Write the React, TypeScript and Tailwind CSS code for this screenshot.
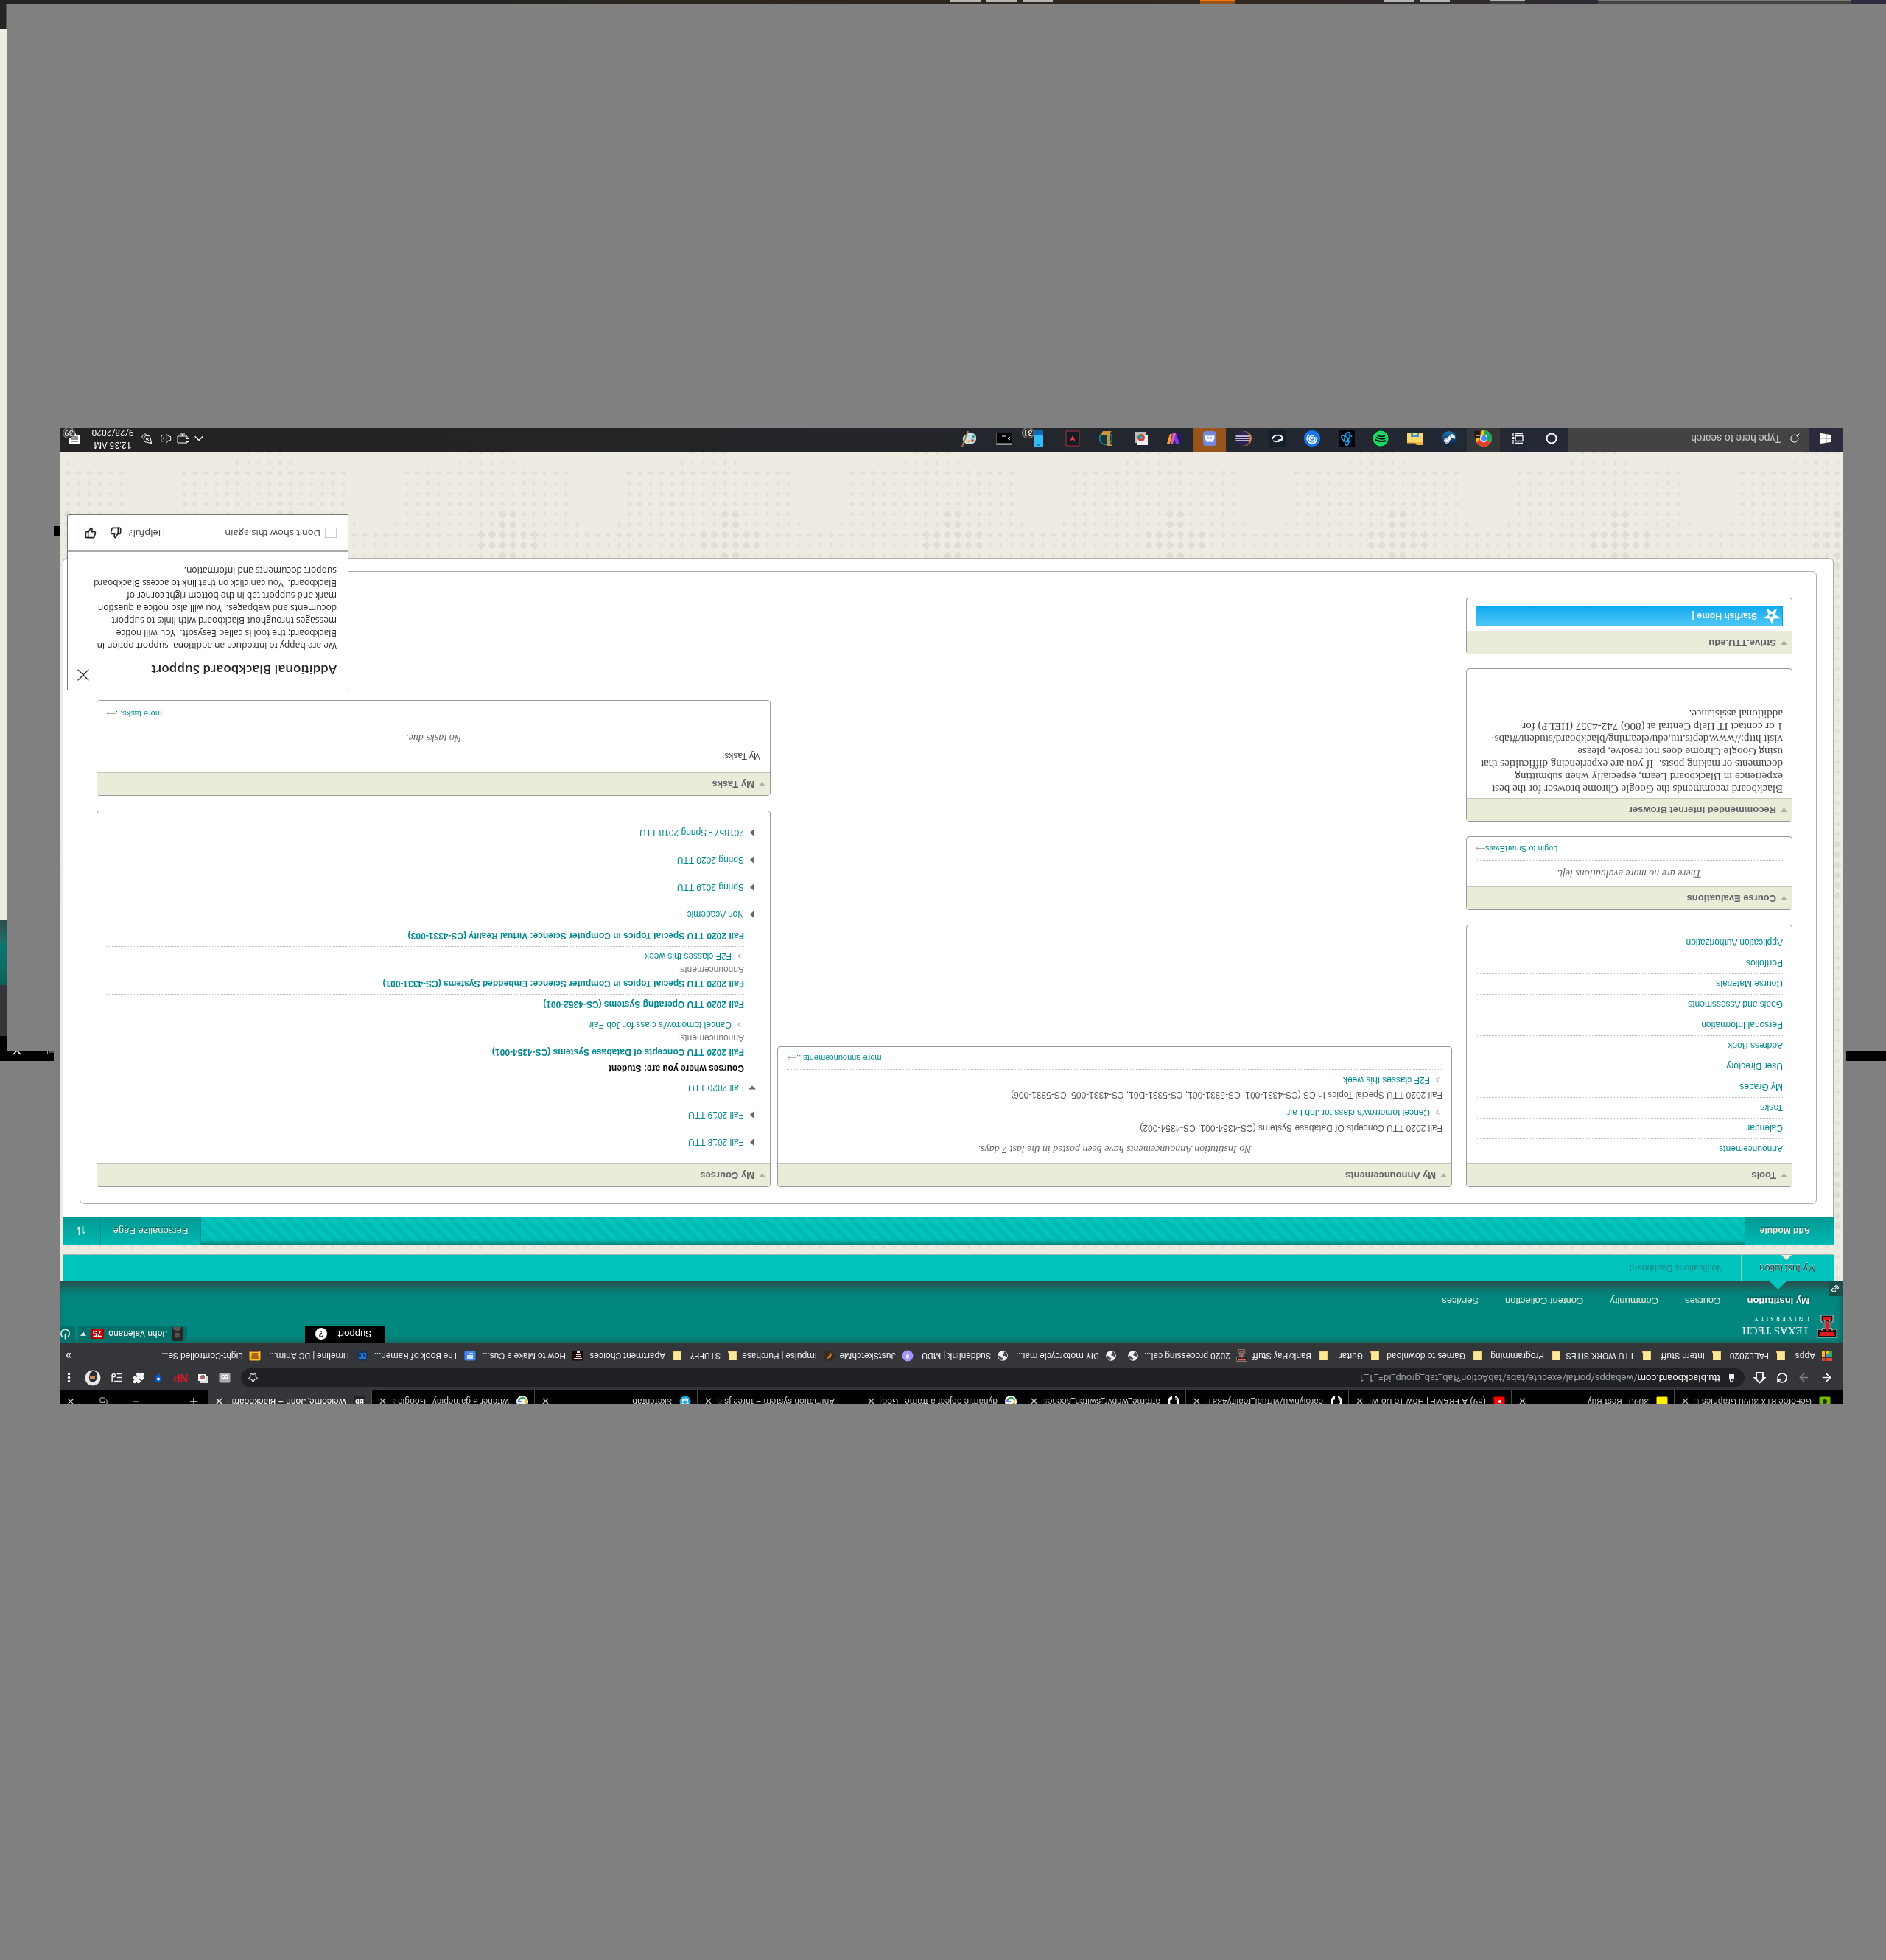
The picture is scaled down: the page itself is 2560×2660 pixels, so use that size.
import React from "react";
import {
  ArrowLeft,
  ArrowRight,
  RotateCw,
  Star,
  Puzzle,
  ListMusic,
  EllipsisVertical,
  Link2,
  Power,
  ThumbsUp,
  ThumbsDown,
  X,
  Plus,
  Minus,
  Copy,
  Search,
  ChevronUp,
  Volume2,
  PenTool,
} from "lucide-react";
import { FaSpotify, FaSteamSymbol, FaDiscord, FaWindows, FaGithub } from "react-icons/fa";

const SANS = "font-['Liberation_Sans',Arial,sans-serif]";
const UI = "font-[Roboto,'Open_Sans',sans-serif]";
const SERIF = "font-['Liberation_Serif','Times_New_Roman',serif]";

/* ---------- small drawings ---------- */

function ChromeMark({ size = 16 }: { size?: number }) {
  return (
    <svg width={size} height={size} viewBox="0 0 24 24">
      <circle cx="12" cy="12" r="12" fill="#fbc116" />
      <path d="M12 12 1.6 6A12 12 0 0 1 22.4 6z" fill="#e0412f" />
      <path d="M12 12 1.6 6A12 12 0 0 0 12 24z" fill="#1da362" />
      <path d="M12 6h10.4L17 12z" fill="#e0412f" />
      <circle cx="12" cy="12" r="5.6" fill="#fff" />
      <circle cx="12" cy="12" r="4.5" fill="#4a8cf6" />
    </svg>
  );
}

function GoogleMark() {
  return (
    <svg width="16" height="16" viewBox="0 0 16 16">
      <circle cx="8" cy="8" r="8" fill="#fff" />
      <path d="M3.5 5.5A5 5 0 0 1 12 5" stroke="#ea4335" strokeWidth="2.2" fill="none" />
      <path d="M3.4 10.4a5 5 0 0 1 .1-5" stroke="#fbbc05" strokeWidth="2.2" fill="none" />
      <path d="M3.4 10.4A5 5 0 0 0 11.6 11.6" stroke="#34a853" strokeWidth="2.2" fill="none" />
      <path d="M8 8h5a5 5 0 0 1-1.5 3.6" stroke="#4285f4" strokeWidth="2.2" fill="none" />
    </svg>
  );
}

function FolderMark() {
  return (
    <svg width="16" height="16" viewBox="0 0 16 16">
      <path d="M2 2h11v9.5l1 1V15H2z" fill="#f0cf63" />
      <path d="M3 2h9.4v11.4H3z" fill="#ffe79a" />
    </svg>
  );
}

function GlobeMark() {
  return (
    <svg width="16" height="16" viewBox="0 0 16 16">
      <circle cx="8" cy="8" r="6.8" fill="#f1f3f4" />
      <path
        d="M2 7c2-.5 3 1 4.500 1S8 10 7 11s-.5 2-1.500 3C3 12.500 1.500 10 2 7zM9 2c-1 1-2 1.500-1.500 2.500S10 5 10 6.500 13 8 14 8c0-3-2-5.500-5-6z"
        fill="#46484c"
      />
    </svg>
  );
}

function AppsMark() {
  const colors = ["#ea4335", "#ea4335", "#ea4335", "#34a853", "#4285f4", "#fbbc05", "#34a853", "#fbbc05", "#fbbc05"];
  return (
    <svg width="16" height="16" viewBox="0 0 16 16">
      {colors.map((c, i) => (
        <rect key={i} x={1 + (i % 3) * 5} y={1 + Math.floor(i / 3) * 5} width="4" height="4" fill={c} />
      ))}
    </svg>
  );
}

function TTMark({ size = 16, red = "#e11b22" }: { size?: number; red?: string }) {
  return (
    <svg width={size} height={Math.round(size * 1.15)} viewBox="0 0 28 32">
      <path d="M1 1h26v11h-8v10h3v9H6v-9h3V12H1z" fill="#111" stroke="#cfcfcf" strokeWidth="1" />
      <path d="M3 3h22l-2 5H5z" fill={red} />
      <path d="M12 10h4v13h-4zM8.500 25h11v3.500h-11z" fill={red} />
      <path d="M7 10v3h4v11H8M21 10v3h-4v11h3" stroke="#e8e8e8" strokeWidth=".9" fill="none" />
    </svg>
  );
}

function Tile({ bg, fg, shape }: { bg: string; fg: string; shape: "lines" | "dot" | "bars" | "face" | "wave" | "play" }) {
  return (
    <svg width="16" height="16" viewBox="0 0 16 16">
      <rect x="0.5" y="1.5" width="15" height="13" rx="1.5" fill={bg} />
      {shape === "lines" && <path d="M4 5h8M4 8h8M4 11h5" stroke={fg} strokeWidth="1.600" />}
      {shape === "dot" && <circle cx="8" cy="8" r="3" fill={fg} />}
      {shape === "play" && <path d="M6 5.500 11 8l-5 2.500z" fill={fg} />}
      {shape === "bars" && <path d="M2 4h11M3 7h7M4 10h6M5 13h4" stroke={fg} strokeWidth="2" />}
      {shape === "face" && <path d="M3 4h10l-1 8H4zM2 13h12v2H2z" fill={fg} />}
      {shape === "wave" && <path d="M4 9.500c0-3 3-3 4 0s4 3 4 0-3-3-4 0-4 3-4 0" stroke={fg} strokeWidth="1.300" fill="none" />}
    </svg>
  );
}

function RoundMark({ bg, fg, kind }: { bg: string; fg: string; kind: "pin" | "ring" | "cube" | "slash" }) {
  return (
    <svg width="16" height="16" viewBox="0 0 16 16">
      <circle cx="8" cy="8" r="7.500" fill={bg} />
      {kind === "pin" && <path d="M8 3v9M6.500 5h3v4h-3z" stroke={fg} fill={fg} />}
      {kind === "ring" && <path d="M4 11V5h2a3 3 0 0 1 0 6zM13 6a3 3 0 1 0 0 4" stroke={fg} strokeWidth="1.800" fill="none" />}
      {kind === "cube" && <path d="M3 5.500 8 3l5 2.500-1.500 1L8 5 4.500 6.500zM4 7l3.500 1.700V13L4 11zM12 7 8.500 8.700V13L12 11z" fill={fg} />}
      {kind === "slash" && <path d="M5 12c-2-4 2-8 6-8-2 1-2 4-4 5s0 2-2 3z" fill={fg} />}
    </svg>
  );
}

/* dotted world-map backdrop: a tile of small crosses with a few heavy clusters */
function CrossBackdrop() {
  const small: string[] = [];
  const big: string[] = [];
  for (let row = 0; row < 32; row++) {
    for (let i = 0; i < 21; i++) {
      let from = 0;
      let to = 20;
      if (row === 0) [from, to] = [7, 10];
      else if (row === 1) [from, to] = [6, 11];
      else if (row < 7) [from, to] = [1, 16];
      else if (row === 7) [from, to] = [0, 17];
      else if (row > 11 && row < 16) [from, to] = [1, 19];
      if (i < from || i > to) continue;
      const x = (((10 - i) * 14.4 + 302) % 302) + 7;
      const y = 448 - 14 * row - 7;
      const heavy = (row >= 6 && row <= 11 && (i === 10 || i === 11)) || ((row === 8 || row === 9) && i >= 8 && i <= 13);
      if (heavy) big.push(`M${x - 2.5} ${y}h5M${x} ${y - 2.5}v5`);
      else small.push(`M${x - 3.5} ${y}h7M${x} ${y - 3.5}v7`);
    }
  }
  return (
    <svg className="absolute inset-0 h-full w-full" aria-hidden="true">
      <defs>
        <pattern id="crosses" width="302" height="448" x="0" y="236" patternUnits="userSpaceOnUse">
          <path d={small.join("")} stroke="#e3e0d8" strokeWidth="2" />
          <path d={big.join("")} stroke="#e0ddd5" strokeWidth="5" strokeLinecap="round" />
        </pattern>
      </defs>
      <rect width="100%" height="100%" fill="#eeebe3" />
      <rect width="100%" height="100%" fill="url(#crosses)" />
    </svg>
  );
}

/* ---------- browser chrome ---------- */

const tabs: { title: string; icon: React.ReactNode }[] = [
  { title: "GeForce RTX 3090 Graphics Card", icon: <Tile bg="#76b900" fg="#1d2b05" shape="dot" /> },
  { title: "3090 - Best Buy", icon: <Tile bg="#fff200" fg="#fff200" shape="dot" /> },
  { title: "(59) A-FRAME | How To Do Web", icon: <Tile bg="#ff0000" fg="#ffffff" shape="play" /> },
  { title: "carolynwu/virtual_reality4331: T", icon: <FaGithub size={16} color="#fff" /> },
  { title: "aframe_webvr_switch_scenes/inc", icon: <FaGithub size={16} color="#fff" /> },
  { title: "dynamic object a-frame - Googl", icon: <GoogleMark /> },
  { title: "Animation system – three.js doc", icon: <span className="w-4" /> },
  { title: "Sketchfab", icon: <RoundMark bg="#1caad9" fg="#fff" kind="cube" /> },
  { title: "witcher 3 gameplay - Google Se", icon: <GoogleMark /> },
];

function Tab({ title, icon, active }: { title: string; icon: React.ReactNode; active?: boolean }) {
  return (
    <div
      className={
        active
          ? "flex h-full w-[221px] shrink-0 items-end bg-[#35363a] pr-2 pl-2 text-white"
          : "flex h-full w-[221px] shrink-0 items-end border-r border-[#4a4b4e] pr-2 pl-2 text-[#c8cbcf]"
      }
    >
      <div className="flex h-8 w-full shrink-0 items-center">
        <span className="flex w-[26px] shrink-0">{icon}</span>
        <span className="min-w-0 flex-1 overflow-hidden mask-r-from-92% text-[12px] leading-4 whitespace-nowrap">{title}</span>
        <button aria-label="Close tab" className="ml-1 shrink-0">
          <X size={13} strokeWidth={2.4} />
        </button>
      </div>
    </div>
  );
}

function TabStrip() {
  return (
    <div className={`${UI} flex h-[19px] items-end overflow-hidden bg-black pl-2`}>
      {tabs.map((t) => (
        <Tab key={t.title} title={t.title} icon={t.icon} />
      ))}
      <Tab
        active
        title="Welcome, John – Blackboard Le"
        icon={
          <span className="flex h-4 w-4 items-center justify-center border border-[#d9a441] bg-[#222] text-[10px] leading-3 font-bold text-white">
            Bb
          </span>
        }
      />
      <div className="flex h-8 flex-1 items-center text-[#d5d7da]">
        <button aria-label="New tab" className="ml-3">
          <Plus size={16} />
        </button>
        <span className="flex-1" />
        <button aria-label="Minimize" className="mr-8">
          <Minus size={12} />
        </button>
        <button aria-label="Restore" className="mr-8">
          <Copy size={11} />
        </button>
        <button aria-label="Close window" className="mr-2">
          <X size={14} />
        </button>
      </div>
    </div>
  );
}

function AddressRow() {
  return (
    <div className={`${UI} flex h-[29px] items-end bg-[#35363a] pt-[3px]`}>
      <div className="flex h-[26px] w-[133px] shrink-0 items-center pl-[13px] text-white">
        <button aria-label="Back" className="w-[31px]">
          <ArrowLeft size={17} strokeWidth={2.4} />
        </button>
        <button aria-label="Forward" className="w-[30px] text-[#84868a]">
          <ArrowRight size={17} strokeWidth={2.4} />
        </button>
        <button aria-label="Reload" className="w-[30px]">
          <RotateCw size={16} strokeWidth={2.4} />
        </button>
        <button aria-label="Home">
          <svg width="17" height="17" viewBox="0 0 17 17" fill="none" stroke="#fff" strokeWidth="1.800">
            <path d="M8.500 1.500 1.500 8H4v7h9V8h2.500z" />
          </svg>
        </button>
      </div>
      <div className="flex h-[26px] min-w-0 flex-1 items-center rounded-full bg-[#202124] pr-[9px] pl-3 text-[13px]">
        <svg width="11" height="12" viewBox="0 0 11 12">
          <path d="M2 5h7v6H2z" fill="#e8eaed" />
          <path d="M3.500 5V3a2 2 0 0 1 4 0v2" fill="none" stroke="#e8eaed" strokeWidth="1.300" />
        </svg>
        <label htmlFor="url" className="ml-[10px] text-white">
          ttu.blackboard.com
        </label>
        <input
          id="url"
          defaultValue="/webapps/portal/execute/tabs/tabAction?tab_tab_group_id=_1_1"
          className="min-w-0 flex-1 bg-transparent text-[#9aa0a6] outline-none"
        />
        <button aria-label="Bookmark" className="text-[#d5d7da]">
          <Star size={15} />
        </button>
      </div>
      <div className="flex h-[26px] w-[246px] shrink-0 items-center justify-between pr-1 pl-[14px] text-white">
        <Tile bg="#a9abae" fg="#fff" shape="wave" />
        <svg width="16" height="16" viewBox="0 0 16 16">
          <path d="M1 1h11v9H1z" fill="#ddd" />
          <path d="M4 4h11v9H4z" fill="#fff" />
          <circle cx="9" cy="9" r="3" fill="#ea4335" />
          <path d="M9 9H6a3 3 0 0 0 3 3z" fill="#34a853" />
          <circle cx="9" cy="9" r="1.300" fill="#4285f4" />
        </svg>
        <span className="text-[15px] leading-4 font-medium text-[#e0142c]">NP</span>
        <svg width="14" height="16" viewBox="0 0 14 16">
          <path d="M7 15C5 11 2.500 9 2.500 6a4.500 4.500 0 0 1 9 0c0 3-2.500 5-4.500 9z" fill="#0b57d0" />
          <circle cx="7" cy="6.500" r="2" fill="#fff" />
        </svg>
        <Puzzle size={16} fill="#f1f3f4" />
        <ListMusic size={17} />
        <svg width="22" height="22" viewBox="0 0 22 22">
          <circle cx="11" cy="11" r="10.500" fill="#e8e6e2" />
          <path d="M5 18c0-7 0-11 6-13 4 0 5 3 5 7l-1 5-4 4z" fill="#2b2c30" />
          <path d="M8 10h7v3H8z" fill="#c58c5d" />
        </svg>
        <EllipsisVertical size={17} strokeWidth={3} />
      </div>
    </div>
  );
}

const bookmarks: { label: string; w: string; icon: React.ReactNode }[] = [
  { label: "Apps", w: "w-[63px]", icon: <AppsMark /> },
  { label: "FALL2020", w: "w-[87px]", icon: <FolderMark /> },
  { label: "Intern Stuff", w: "w-[95px]", icon: <FolderMark /> },
  { label: "TTU WORK SITES", w: "w-[123px]", icon: <FolderMark /> },
  { label: "Programming", w: "w-[107px]", icon: <FolderMark /> },
  { label: "Games to download", w: "w-[139px]", icon: <FolderMark /> },
  { label: "Guitar", w: "w-[70px]", icon: <FolderMark /> },
  { label: "Bank/Pay Stuff", w: "w-[111px]", icon: <FolderMark /> },
  { label: "2020 processing cal...", w: "w-[147px]", icon: <TTMark size={15} red="#e0695c" /> },
  { label: "", w: "w-[30px]", icon: <GlobeMark /> },
  { label: "DIY motorcycle mai...", w: "w-[147px]", icon: <GlobeMark /> },
  { label: "Suddenlink | MDU", w: "w-[129px]", icon: <GlobeMark /> },
  { label: "JustSketchMe", w: "w-[107px]", icon: <RoundMark bg="#a594f9" fg="#e4defd" kind="pin" /> },
  { label: "Impulse | Purchase", w: "w-[131px]", icon: <RoundMark bg="#3a2a18" fg="#d88b2a" kind="slash" /> },
  { label: "STUFF?", w: "w-[75px]", icon: <FolderMark /> },
  { label: "Apartment Choices", w: "w-[135px]", icon: <FolderMark /> },
  { label: "How to Make a Cus...", w: "w-[146px]", icon: <Tile bg="#190506" fg="#e8dcdc" shape="bars" /> },
  { label: "The Book of Ramen...", w: "w-[146px]", icon: <Tile bg="#4285f4" fg="#fff" shape="lines" /> },
  { label: "Timeline | DC Anim...", w: "w-[146px]", icon: <RoundMark bg="#16335b" fg="#1f7fe0" kind="ring" /> },
  { label: "Light-Controlled Se...", w: "w-[130px]", icon: <Tile bg="#ffc21a" fg="#a8641e" shape="face" /> },
];

function BookmarkRow() {
  return (
    <nav
      className={`${UI} flex h-[35px] items-center overflow-hidden border-b border-[#222326] bg-[#35363a] pl-[13px] text-[12px] text-[#eceef0]`}
    >
      {bookmarks.map((b, i) => (
        <a key={i} href="#" aria-label={b.label || "Site"} className={`${b.w} flex shrink-0 items-center gap-2 whitespace-nowrap`}>
          <span className="shrink-0">{b.icon}</span>
          {b.label}
        </a>
      ))}
      <button className="mr-2 ml-auto text-[16px] font-bold">»</button>
    </nav>
  );
}

/* ---------- institution header ---------- */

function SiteHeader() {
  const nav = ["Courses", "Community", "Content Collection", "Services"];
  return (
    <header
      className={`${SANS} relative flex h-[83px] justify-between bg-[#00877f] shadow-[inset_0_-16px_14px_-8px_#2f4a4a,inset_0_5px_8px_-4px_#1d5c58,inset_8px_0_10px_-8px_#1d5c58]`}
    >
      <div className="flex flex-col">
        <div className="flex h-10 items-start pt-[6px] pl-[7px] text-white">
          <TTMark size={28} />
          <div className={`${SERIF} ml-[10px] flex flex-col`}>
            <span className="border-b border-[#a8c9c6] text-[15px] leading-5">TEXAS TECH</span>
            <span className="text-[8px] leading-3 tracking-[3px]">UNIVERSITY.</span>
          </div>
        </div>
        <div className="flex h-[34px] items-center pl-[45px] text-[13px] text-[#e6efd8]">
          <a href="#" className="mr-9 font-bold text-white [text-shadow:0_1px_3px_#00302d]">
            My Institution
          </a>
          {nav.map((n) => (
            <a key={n} href="#" className="mr-9">
              {n}
            </a>
          ))}
        </div>
      </div>
      <div className="flex h-[23px] items-stretch text-[12px] text-white">
        <button className={`${UI} mr-40 flex w-[108px] items-center justify-between bg-black pr-[14px] pl-[18px] text-[13px]`}>
          Support
          <span className="flex h-4 w-4 items-center justify-center rounded-full bg-white text-[13px] font-bold text-black">?</span>
        </button>
        <button className="flex w-[148px] items-center bg-[#00706a] pl-[6px]">
          <svg width="15" height="19" viewBox="0 0 15 19">
            <rect width="15" height="19" fill="#262626" />
            <circle cx="7.500" cy="8" r="3.500" fill="#555" />
            <path d="M2 19c0-7 11-7 11 0z" fill="#555" />
          </svg>
          <span className={`${UI} ml-[6px] text-[12px]`}>John Valeriano</span>
          <span className="ml-[6px] bg-[#b80000] px-[3px] text-[11px] leading-[14px] font-bold">75</span>
          <svg className="ml-[6px]" width="8" height="6" viewBox="0 0 8 6">
            <path d="M0 0h8L4 6z" fill="#d5dfd8" />
          </svg>
        </button>
        <button aria-label="Log out" className="ml-1 flex w-[21px] items-center justify-end overflow-hidden bg-[#00706a]">
          <Power size={15} strokeWidth={2.6} className="shrink-0 text-[#e2ebe4]" />
        </button>
      </div>
      <button
        aria-label="Quick links"
        className="absolute bottom-0 left-0 flex h-5 w-[19px] items-center justify-center bg-[#1c4e4c] text-white"
      >
        <Link2 size={12} className="-rotate-45" strokeWidth={2.4} />
      </button>
      <svg className="absolute bottom-0 left-[76px]" width="23" height="11" viewBox="0 0 23 11">
        <path d="M0 11h23L11.500 0z" fill="#00c4bd" />
      </svg>
    </header>
  );
}

function SubTabs() {
  return (
    <nav className={`${SANS} relative mr-1 ml-3 flex h-[37px] items-stretch border-b border-[#a9b5ac] bg-[#00c4bd] text-[12px]`}>
      <a
        href="#"
        className="relative flex w-[126px] items-center justify-center border-r border-[#8fcfa8] text-[13px] text-[#333a40] [text-shadow:0_1px_0_#c8e8e0]"
      >
        My Institution
        <svg className="absolute bottom-0 left-[57px]" width="14" height="7" viewBox="0 0 14 7">
          <path d="M0 7 7 0l7 7z" fill="#eeebe3" />
        </svg>
      </a>
      <a href="#" className="flex items-center pl-6 text-[#158d88]">
        Notifications Dashboard
      </a>
    </nav>
  );
}

function ModuleBar() {
  const btn =
    "flex items-center justify-center border-[#008f8a] bg-linear-to-b from-[#00b8b2] to-[#009993] text-[#f0f0e4] [text-shadow:0_1px_1px_#004744]";
  return (
    <div className="mt-3 mr-1 ml-3 flex h-[39px] items-stretch border-t border-[#8a9a94] bg-[repeating-linear-gradient(45deg,#00c4bd_0_6px,#00bab3_6px_12px)] shadow-[inset_0_7px_5px_-4px_#007d78]">
      <button className={`${SANS} ${btn} w-[121px] border-r pl-3 text-[12px] font-bold`}>Add Module</button>
      <span className="flex-1" />
      <button className={`${SANS} ${btn} w-[137px] border-x text-[13px]`}>Personalize Page</button>
      <button aria-label="Reorder" className={`${btn} w-[51px]`}>
        <svg width="12" height="12" viewBox="0 0 12 12" fill="none" stroke="#f0f0e4" strokeWidth="1.800">
          <path d="M3.500 12V2M1 4l2.500-3M8.500 0v11M8.500 11l2.500-3" />
        </svg>
      </button>
    </div>
  );
}

/* ---------- portal modules ---------- */

function Panel({ title, children, open }: { title: string; children: React.ReactNode; open?: boolean }) {
  return (
    <section
      className={
        open
          ? "mb-5 rounded-sm border border-t-0 border-[#999] bg-white"
          : "mb-5 rounded-sm border border-[#999] bg-white"
      }
    >
      <h2
        className={`${SANS} flex h-[31px] items-center border-b border-[#c4c6bc] bg-[#e9ecd8] pl-[6px] text-[13px] font-bold text-[#60626a]`}
      >
        <svg width="9" height="6" viewBox="0 0 9 6" className="mr-[6px]">
          <path d="M0 0h9L4.500 6z" fill="#aeb0a4" />
        </svg>
        {title}
      </h2>
      {children}
    </section>
  );
}

function MoreLink({ children }: { children: React.ReactNode }) {
  return (
    <span className="flex items-center justify-end text-[11px]">
      <a href="#" className="text-[#008891]">
        {children}
      </a>
      <svg width="13" height="7" viewBox="0 0 13 7" fill="none" stroke="#aaa">
        <path d="M0 3.500h12M9.500 1l2.500 2.500L9.500 6" />
      </svg>
    </span>
  );
}

const tools = [
  "Announcements",
  "Calendar",
  "Tasks",
  "My Grades",
  "User Directory",
  "Address Book",
  "Personal Information",
  "Goals and Assessments",
  "Course Materials",
  "Portfolios",
  "Application Authorization",
];

function LeftColumn() {
  return (
    <div className="mr-[19px] min-w-0 flex-[443]">
      <Panel title="Tools">
        <ul className={`${SANS} px-3 pt-[6px] pb-[9px] text-[12px] text-[#008891]`}>
          {tools.map((t) => (
            <li
              key={t}
              className={
                t === "User Directory" || t === "Application Authorization"
                  ? "flex h-7 items-center"
                  : "flex h-7 items-center border-b border-dotted border-[#bbb]"
              }
            >
              <a href="#">{t}</a>
            </li>
          ))}
        </ul>
      </Panel>
      <Panel title="Course Evaluations">
        <div className="px-3">
          <p className={`${SERIF} flex h-9 items-center justify-center border-b border-dotted border-[#bbb] text-[14px] text-[#666] italic`}>
            There are no more evaluations left.
          </p>
          <div className={`${SANS} flex h-[31px] items-center justify-end`}>
            <MoreLink>Login to SmartEvals</MoreLink>
          </div>
        </div>
      </Panel>
      <Panel title="Recommended Internet Browser">
        <p className={`${SERIF} overflow-hidden px-3 pt-1 pb-[52px] text-[15px] leading-[17px] whitespace-nowrap text-[#444]`}>
          Blackboard recommends the Google Chrome browser for the best
          <br />
          experience in Blackboard Learn, especially when submitting
          <br />
          documents or making posts.&nbsp; If you are experiencing difficulties that
          <br />
          using Google Chrome does not resolve, please
          <br />
          visit http://www.depts.ttu.edu/elearning/blackboard/student/#tabs-
          <br />
          1 or contact IT Help Central at (806) 742-4357 (HELP) for
          <br />
          additional assistance.
        </p>
      </Panel>
      <Panel title="Strive.TTU.edu" open>
        <div className="px-3 pt-[6px] pb-[10px]">
          <div
            className={`${SANS} flex h-7 items-center border border-[#0d9ddb] bg-linear-to-b from-[#4cc7f7] to-[#03a9ee] text-[12px] font-bold text-white`}
          >
            <svg width="24" height="24" viewBox="0 0 24 24" className="mr-2 ml-[2px]">
              <path d="m12 1 3 7.500 8 .5-6.200 5 2.200 8.500-7-4.700L5 22.500 7.200 14 1 9l8-.5z" fill="#fff" />
              <path d="m13 9 1 2.500 2.500.5-2.200 1.500.7 2.500-2-1.500-2 1.500.7-2.500L9.500 12l2.500-.5z" fill="#24b4f0" />
            </svg>
            <a href="#">Starfish Home</a>
            <span className="ml-1">|</span>
          </div>
        </div>
      </Panel>
    </div>
  );
}

function Sub({ children }: { children: React.ReactNode }) {
  return (
    <span className="flex items-center">
      <svg width="5" height="7" viewBox="0 0 5 7" className="mr-2 ml-1" fill="none" stroke="#777">
        <path d="m1 .5 3 3-3 3" />
      </svg>
      <a href="#" className="text-[#008891]">
        {children}
      </a>
    </span>
  );
}

function MiddleColumn() {
  return (
    <div className="mr-[9px] min-w-0 flex-[916]">
      <Panel title="My Announcements">
        <div className={`${SANS} px-3 text-[12px] text-[#555]`}>
          <p className={`${SERIF} flex h-[38px] items-center justify-center text-[14px] text-[#666] italic`}>
            No Institution Announcements have been posted in the last 7 days.
          </p>
          <div className="border-b border-dotted border-[#bbb] pb-1">
            <p className="flex h-5 items-center">Fall 2020 TTU Concepts Of Database Systems (CS-4354-001, CS-4354-002)</p>
            <p className="mb-[3px] flex h-[22px] items-center">
              <Sub>Cancel tomorrow's class for Job Fair</Sub>
            </p>
            <p className="flex h-5 items-center">
              Fall 2020 TTU Special Topics In CS (CS-4331-001, CS-5331-001, CS-5331-D01, CS-4331-005, CS-5331-006)
            </p>
            <p className="flex h-5 items-center">
              <Sub>F2F classes this week</Sub>
            </p>
          </div>
          <div className="flex h-[30px] items-center justify-end">
            <MoreLink>more announcements...</MoreLink>
          </div>
        </div>
      </Panel>
    </div>
  );
}

function Term({ label, expanded }: { label: string; expanded?: boolean }) {
  return (
    <button className="flex h-[37px] items-center text-[#008891]">
      <span className="flex w-[23px] justify-center">
        <svg width="10" height="12" viewBox="0 0 10 12">
          <path d={expanded ? "M0 3.500h10L5 8.500z" : "M2 .5 8 6l-6 5.500z"} fill="#666" />
        </svg>
      </span>
      {label}
    </button>
  );
}

function Course({ title, announcement, last }: { title: string; announcement?: string; last?: boolean }) {
  return (
    <div className={last ? "ml-[23px] pt-1" : "ml-[23px] border-b border-dotted border-[#bbb] pt-1 pb-[3px]"}>
      <a href="#" className="flex h-5 items-center font-bold text-[#008891]">
        {title}
      </a>
      {announcement && (
        <>
          <p className="flex h-[17px] items-center text-[#777]">Announcements:</p>
          <p className="flex h-5 items-center">
            <Sub>{announcement}</Sub>
          </p>
        </>
      )}
    </div>
  );
}

function RightColumn() {
  return (
    <div className="min-w-0 flex-[915]">
      <Panel title="My Courses">
        <div className={`${SANS} flex flex-col items-stretch px-3 pt-[10px] pb-[11px] text-[12px]`}>
          <Term label="Fall 2018 TTU" />
          <Term label="Fall 2019 TTU" />
          <Term label="Fall 2020 TTU" expanded />
          <h3 className="ml-[23px] flex h-4 items-center font-bold text-black">Courses where you are: Student</h3>
          <Course title="Fall 2020 TTU Concepts of Database Systems (CS-4354-001)" announcement="Cancel tomorrow's class for Job Fair" />
          <Course title="Fall 2020 TTU Operating Systems (CS-4352-001)" />
          <Course
            title="Fall 2020 TTU Special Topics in Computer Science: Embedded Systems (CS-4331-001)"
            announcement="F2F classes this week"
          />
          <Course title="Fall 2020 TTU Special Topics in Computer Science: Virtual Reality (CS-4331-003)" last />
          <Term label="Non Academic" />
          <Term label="Spring 2019 TTU" />
          <Term label="Spring 2020 TTU" />
          <Term label="201857 - Spring 2018 TTU" />
        </div>
      </Panel>
      <Panel title="My Tasks">
        <div className={`${SANS} px-3 pt-[10px] pb-[3px] text-[12px] text-[#444]`}>
          <p className="flex h-6 items-center">My Tasks:</p>
          <p className={`${SERIF} mb-[6px] flex h-6 items-center justify-center text-[14px] text-[#666] italic`}>No tasks due.</p>
          <div className="flex h-[30px] items-center justify-end">
            <MoreLink>more tasks...</MoreLink>
          </div>
        </div>
      </Panel>
    </div>
  );
}

function SupportPopup() {
  return (
    <aside className="absolute right-[10px] bottom-[84px] w-[382px] rounded-xs border border-[#777] bg-white font-['Open_Sans','Noto_Sans',sans-serif] text-[#262626]">
      <div className="relative border-b-2 border-[#aaa] px-[15px] pt-4 pb-[17px]">
        <h2 className="text-[17px] leading-[22px] font-semibold">Additional Blackboard Support</h2>
        <button aria-label="Close" className="absolute top-[6px] right-[7px]">
          <X size={28} strokeWidth={1} />
        </button>
        <p className="mt-[13px] text-[12px] leading-[17px] whitespace-nowrap">
          We are happy to introduce an additional support option in
          <br />
          Blackboard; the tool is called Eesysoft.&nbsp; You will notice
          <br />
          messages throughout Blackboard with links to support
          <br />
          documents and webpages.&nbsp; You will also notice a question
          <br />
          mark and support tab in the bottom right corner of
          <br />
          Blackboard.&nbsp; You can click on that link to access Blackboard
          <br />
          support documents and information.
        </p>
      </div>
      <div className="flex h-12 items-center px-[15px] text-[13px] text-[#444]">
        <label htmlFor="hide" className="flex items-center gap-[6px]">
          <input id="hide" type="checkbox" className="h-[14px] w-4 appearance-none border border-[#ccc]" />
          Don't show this again
        </label>
        <span className="mr-[10px] ml-auto">Helpful?</span>
        <button aria-label="Helpful" className="mr-[18px] text-[#222]">
          <ThumbsUp size={16} strokeWidth={2.4} />
        </button>
        <button aria-label="Not helpful" className="mr-2 text-[#222]">
          <ThumbsDown size={16} strokeWidth={2.4} />
        </button>
      </div>
    </aside>
  );
}

/* ---------- taskbar ---------- */

function Slot({ label, children, tone = "none" }: { label: string; children: React.ReactNode; tone?: "none" | "grey" | "orange" }) {
  const bg = tone === "grey" ? "bg-[#343537]" : tone === "orange" ? "bg-[#97541d]" : "";
  return (
    <div className="flex min-w-[46px] flex-1 justify-center">
      <button aria-label={label} className={`${bg} relative flex h-[33px] w-[45px] items-center justify-center pt-1`}>
        {children}
      </button>
    </div>
  );
}

function Count({ n }: { n: string }) {
  return (
    <span className="absolute right-0 -bottom-px flex h-[15px] w-[17px] items-center justify-center rounded-full border border-[#aaa] bg-[#3a3633] text-[11px] leading-3 text-white">
      {n}
    </span>
  );
}

function Taskbar() {
  return (
    <footer
      className={`${UI} flex h-[33px] items-stretch overflow-hidden bg-linear-to-r from-[#2c2b3c] from-0% via-[#222834] via-20% to-[#242322] to-80%`}
    >
      <button aria-label="Start" className="flex w-[46px] shrink-0 items-center justify-center pt-1 text-white">
        <FaWindows size={16} />
      </button>
      <label htmlFor="find" className="flex w-[326px] shrink-0 items-center border-t border-[#6a6a6a] bg-[#434343] pt-1 pl-[11px] text-white">
        <Search size={15} strokeWidth={1.6} className="scale-x-[-1]" />
        <input
          id="find"
          placeholder="Type here to search"
          className="ml-3 min-w-0 flex-1 bg-transparent text-[14px] outline-none placeholder:text-[#c9c9c9]"
        />
      </label>
      <div className="flex w-[92px] shrink-0">
        <Slot label="Cortana">
          <svg width="16" height="16" viewBox="0 0 16 16">
            <circle cx="8" cy="8" r="6.500" fill="none" stroke="#fff" strokeWidth="2" />
          </svg>
        </Slot>
        <Slot label="Task view">
          <svg width="17" height="16" viewBox="0 0 17 16" fill="none" stroke="#fff" strokeWidth="1.300">
            <path d="M1 1.500h10M1 4.500h10v7H1zM1 14.500h10M14 0v6M14 11v5" />
            <path d="M12.500 7h3v3h-3z" fill="#fff" stroke="none" />
          </svg>
        </Slot>
      </div>
      <div className="flex w-[744px] shrink-0">
        <Slot label="Chrome" tone="grey">
          <ChromeMark size={22} />
          <svg className="absolute right-[9px] bottom-[3px]" width="12" height="12" viewBox="0 0 12 12">
            <path d="M3 1h7l1 10H2z" fill="#1e1a18" />
            <path d="M3 4h6v2H3z" fill="#c58c5d" />
          </svg>
        </Slot>
        <Slot label="Steam">
          <span className="flex h-5 w-5 items-center justify-center rounded-full bg-linear-to-b from-[#0b1f3d] to-[#1a7ab8]">
            <FaSteamSymbol size={17} color="#fff" />
          </span>
        </Slot>
        <Slot label="Files">
          <svg width="21" height="17" viewBox="0 0 21 17">
            <path d="M0 0h8l2 2.500h11V17H0z" fill="#f3b53a" />
            <path d="M0 4h21v13H0z" fill="#ffd868" />
            <path d="M5 17v-6h11v6h-3v-3H8v3z" fill="#3b97d8" />
          </svg>
        </Slot>
        <Slot label="Spotify">
          <FaSpotify size={22} color="#1ed760" className="rounded-full bg-black" />
        </Slot>
        <Slot label="Battle.net">
          <svg width="22" height="22" viewBox="0 0 22 22">
            <rect width="22" height="22" fill="#02060c" />
            <g fill="none" stroke="#16a0e8" strokeWidth="1.500">
              <path d="M5 8c3-3 9-2 12 2s0 6-4 4S7 7 9 3s4 0 5 5-1 9-4 11-4-2-3-6 5-6 9-6" />
              <path d="M4 13c2 4 8 3 11 1" />
            </g>
          </svg>
        </Slot>
        <Slot label="Uplay">
          <svg width="22" height="22" viewBox="0 0 22 22">
            <circle cx="11" cy="11" r="11" fill="#1677f2" />
            <path
              d="M5 13A6.500 6.500 0 1 1 15 16M8 13a3.600 3.600 0 1 1 6 0c-1.500 2-4 2-5.500 1"
              fill="none"
              stroke="#fff"
              strokeWidth="1.800"
            />
            <circle cx="11" cy="11.500" r="1.600" fill="#fff" />
          </svg>
        </Slot>
        <Slot label="Game">
          <svg width="23" height="22" viewBox="0 0 23 22">
            <rect width="23" height="22" fill="#14212b" />
            <path d="M4 12c2-5 10-7 14-4M19 10c-1 5-8 7-12 4s0-6 4-5" stroke="#fff" strokeWidth="1.800" fill="none" />
          </svg>
        </Slot>
        <Slot label="Eclipse">
          <svg width="22" height="22" viewBox="0 0 22 22">
            <circle cx="10" cy="11" r="10" fill="#e68a2b" />
            <circle cx="12" cy="11" r="10" fill="#2c2255" />
            <path d="M2.500 8h19M2 11h20M2.500 14h19" stroke="#e8e4f4" strokeWidth="1.600" />
          </svg>
        </Slot>
        <Slot label="Discord" tone="orange">
          <span className="flex h-5 w-[18px] items-center justify-center rounded-sm bg-[#7289da]">
            <FaDiscord size={14} color="#fff" />
          </span>
        </Slot>
        <Slot label="Medly">
          <svg width="22" height="18" viewBox="0 0 22 18">
            <path d="M0 16 4 2h4v14z" fill="#2d1a63" />
            <path d="M5 2h5l5 14h-5z" fill="#7a3df0" />
            <path d="M10 16 14 2h3l-3 14z" fill="#f05ab0" />
            <path d="m15 15 3-13h4l-4 13z" fill="#f7a13c" />
          </svg>
        </Slot>
        <Slot label="Photos app">
          <svg width="20" height="20" viewBox="0 0 20 20">
            <path d="M4 4h15v15H4z" fill="#bbb" />
            <path d="M1 1h15v14H1z" fill="#f0f0f0" />
            <circle cx="10" cy="11" r="5" fill="#e0412f" />
            <path d="M10 11h5a5 5 0 0 1-5 5z" fill="#1da362" />
            <circle cx="10" cy="11" r="2" fill="#4a8cf6" />
          </svg>
        </Slot>
        <Slot label="League">
          <svg width="20" height="22" viewBox="0 0 20 22">
            <circle cx="11" cy="11" r="8.500" fill="#0b3a44" stroke="#1f8a96" strokeWidth="1.500" />
            <path d="M2 1h7v15h9l-3 5H3l2-2V4z" fill="#c8953a" />
          </svg>
        </Slot>
        <Slot label="Launcher">
          <svg width="20" height="22" viewBox="0 0 20 22">
            <rect x="1" y="1" width="18" height="20" fill="#161b26" stroke="#a8323d" />
            <path d="m6 7 4 8 4-8-3 2h-2z" fill="#e8394a" />
          </svg>
        </Slot>
        <Slot label="Your phone">
          <svg width="13" height="22" viewBox="0 0 13 22">
            <rect width="13" height="22" rx="1" fill="#0b6cb5" />
            <rect width="13" height="15" fill="#2fbdf2" />
            <path d="M4 2h5" stroke="#074f86" />
          </svg>
          <Count n="31" />
        </Slot>
        <Slot label="Command prompt">
          <svg width="22" height="17" viewBox="0 0 22 17">
            <rect width="22" height="17" fill="#050505" stroke="#aaa" />
            <path d="M1 1.500h20" stroke="#ccc" strokeWidth="2" />
            <path d="M3 7l3 2-3 2M8 12h6" stroke="#fff" fill="none" />
          </svg>
        </Slot>
        <Slot label="Paint">
          <svg width="22" height="22" viewBox="0 0 22 22">
            <path d="M11 3c7 0 10 5 9 9s-4 2-5 4-2 4-6 3S1 15 2 10s5-7 9-7z" fill="#bcdff2" />
            <circle cx="7" cy="8" r="2" fill="#e0412f" />
            <circle cx="12" cy="7" r="2" fill="#f3b53a" />
            <circle cx="6" cy="13" r="2" fill="#3aa757" />
            <path d="M21 0 13 21" stroke="#b87a3a" strokeWidth="2" />
          </svg>
        </Slot>
      </div>
      <div className="ml-auto flex items-center pt-1 text-white">
        <ChevronUp size={20} strokeWidth={1.5} className="mr-[3px]" />
        <svg width="17" height="14" viewBox="0 0 17 14" fill="none" stroke="#fff" className="mr-[7px]">
          <path d="M3 1h13v9H3zM6 13h7M9.500 10v3" />
          <path d="M.5 2.500h4v4h-4z" fill="#242322" />
        </svg>
        <Volume2 size={16} strokeWidth={1.5} className="mr-[10px]" />
        <PenTool size={16} strokeWidth={1.5} className="mr-3" />
        <p className="mr-[18px] flex w-[52px] flex-col items-center text-[12px] leading-[17px] whitespace-nowrap">
          <span>12:35 AM</span>
          <span>9/28/2020</span>
        </p>
        <button aria-label="Notifications" className="relative mr-1 flex h-[29px] w-6 items-center">
          <svg width="16" height="14" viewBox="0 0 16 14">
            <path d="M0 0h16v12H9l-3 2v-2H0z" fill="#fff" />
            <path d="M3 3h10M3 6h10M3 9h7" stroke="#242322" />
          </svg>
          <Count n="39" />
        </button>
      </div>
    </footer>
  );
}

/* ---------- edges of the neighbouring window ---------- */

function TopEdge() {
  return (
    <div className="flex h-[5px] items-start bg-linear-to-r from-[#242322] from-20% via-[#30281f] via-60% to-[#2c2b3c]">
      <span className="w-[50.4%]" />
      <span className="mr-2 h-[3px] w-[41px] bg-[#b4b4b4]" />
      <span className="mr-2 h-[3px] w-[41px] bg-[#b4b4b4]" />
      <span className="h-[3px] w-[41px] bg-[#b4b4b4]" />
      <span className="w-[7.8%]" />
      <span className="h-full w-12 border-t-2 border-[#ff7300] bg-[#97541d]" />
      <span className="w-[7.85%]" />
      <span className="mr-2 h-[3px] w-[41px] bg-[#b4b4b4]" />
      <span className="h-[3px] w-[41px] bg-[#b4b4b4]" />
      <span className="w-[2.1%]" />
      <span className="h-full w-12 border-t-2 border-[#b4b4b4] bg-[#3a3a3a]" />
      <span className="ml-auto h-full w-[343px] border-t border-[#777] bg-[#434343]" />
      <span className="w-12" />
    </div>
  );
}

function LeftEdge() {
  return (
    <div className="flex w-[9px] shrink-0 flex-col self-start">
      <span className="h-[35px] border-r border-[#555] bg-[#262524]" />
      <span className="h-[1208px] bg-[#eeebe3]" />
      <span className="h-[89px] bg-linear-to-b from-[#2f4a4a] via-[#08776f] via-40% to-[#0f5f5a]" />
      <span className="h-[69px] bg-[#35363a]" />
      <span className="h-[34px] bg-black" />
    </div>
  );
}

export default function App() {
  return (
    <div className="relative min-h-screen bg-[#808080]">
      <TopEdge />
      <div className="flex">
        <LeftEdge />
        <div className="relative mt-[576px] mr-[59px] ml-[72px] min-w-0 flex-1 rotate-180">
          <span className="absolute top-[1177px] -right-2 h-[14px] w-2 bg-black" />
          <span className="absolute top-[1177px] -left-px h-[14px] w-px bg-black" />
          <div className="overflow-hidden">
            <TabStrip />
            <AddressRow />
            <BookmarkRow />
            <SiteHeader />
            <div className="relative pb-[143px]">
              <CrossBackdrop />
              <div className="relative">
                <SubTabs />
                <ModuleBar />
                <main className="mr-1 ml-3 rounded-b-md border border-t-0 border-[#aaa] bg-white px-[22px] pt-[17px] pb-[17px]">
                  <div className="flex items-start rounded-md border border-[#b0b0b0] pt-[22px] pr-[22px] pb-[15px] pl-8">
                    <LeftColumn />
                    <MiddleColumn />
                    <RightColumn />
                  </div>
                </main>
              </div>
              <SupportPopup />
            </div>
            <Taskbar />
          </div>
        </div>
      </div>
      <div className="absolute top-[1426px] left-[9px] flex h-[14px] w-16 justify-between bg-black">
        <svg width="30" height="6" viewBox="0 0 30 6">
          <path d="m9 5 5-5 5 5" stroke="#fff" strokeWidth="1.500" fill="none" />
        </svg>
        <svg width="9" height="6" viewBox="0 0 9 6">
          <path d="M.5 0v4.500H9M3 0v2h6" stroke="#999" fill="none" />
        </svg>
      </div>
      <div className="absolute top-[1426px] right-0 flex h-[14px] w-[54px] bg-black pl-[18px]">
        <span className="h-px w-3 bg-[#76b900]" />
      </div>
    </div>
  );
}
